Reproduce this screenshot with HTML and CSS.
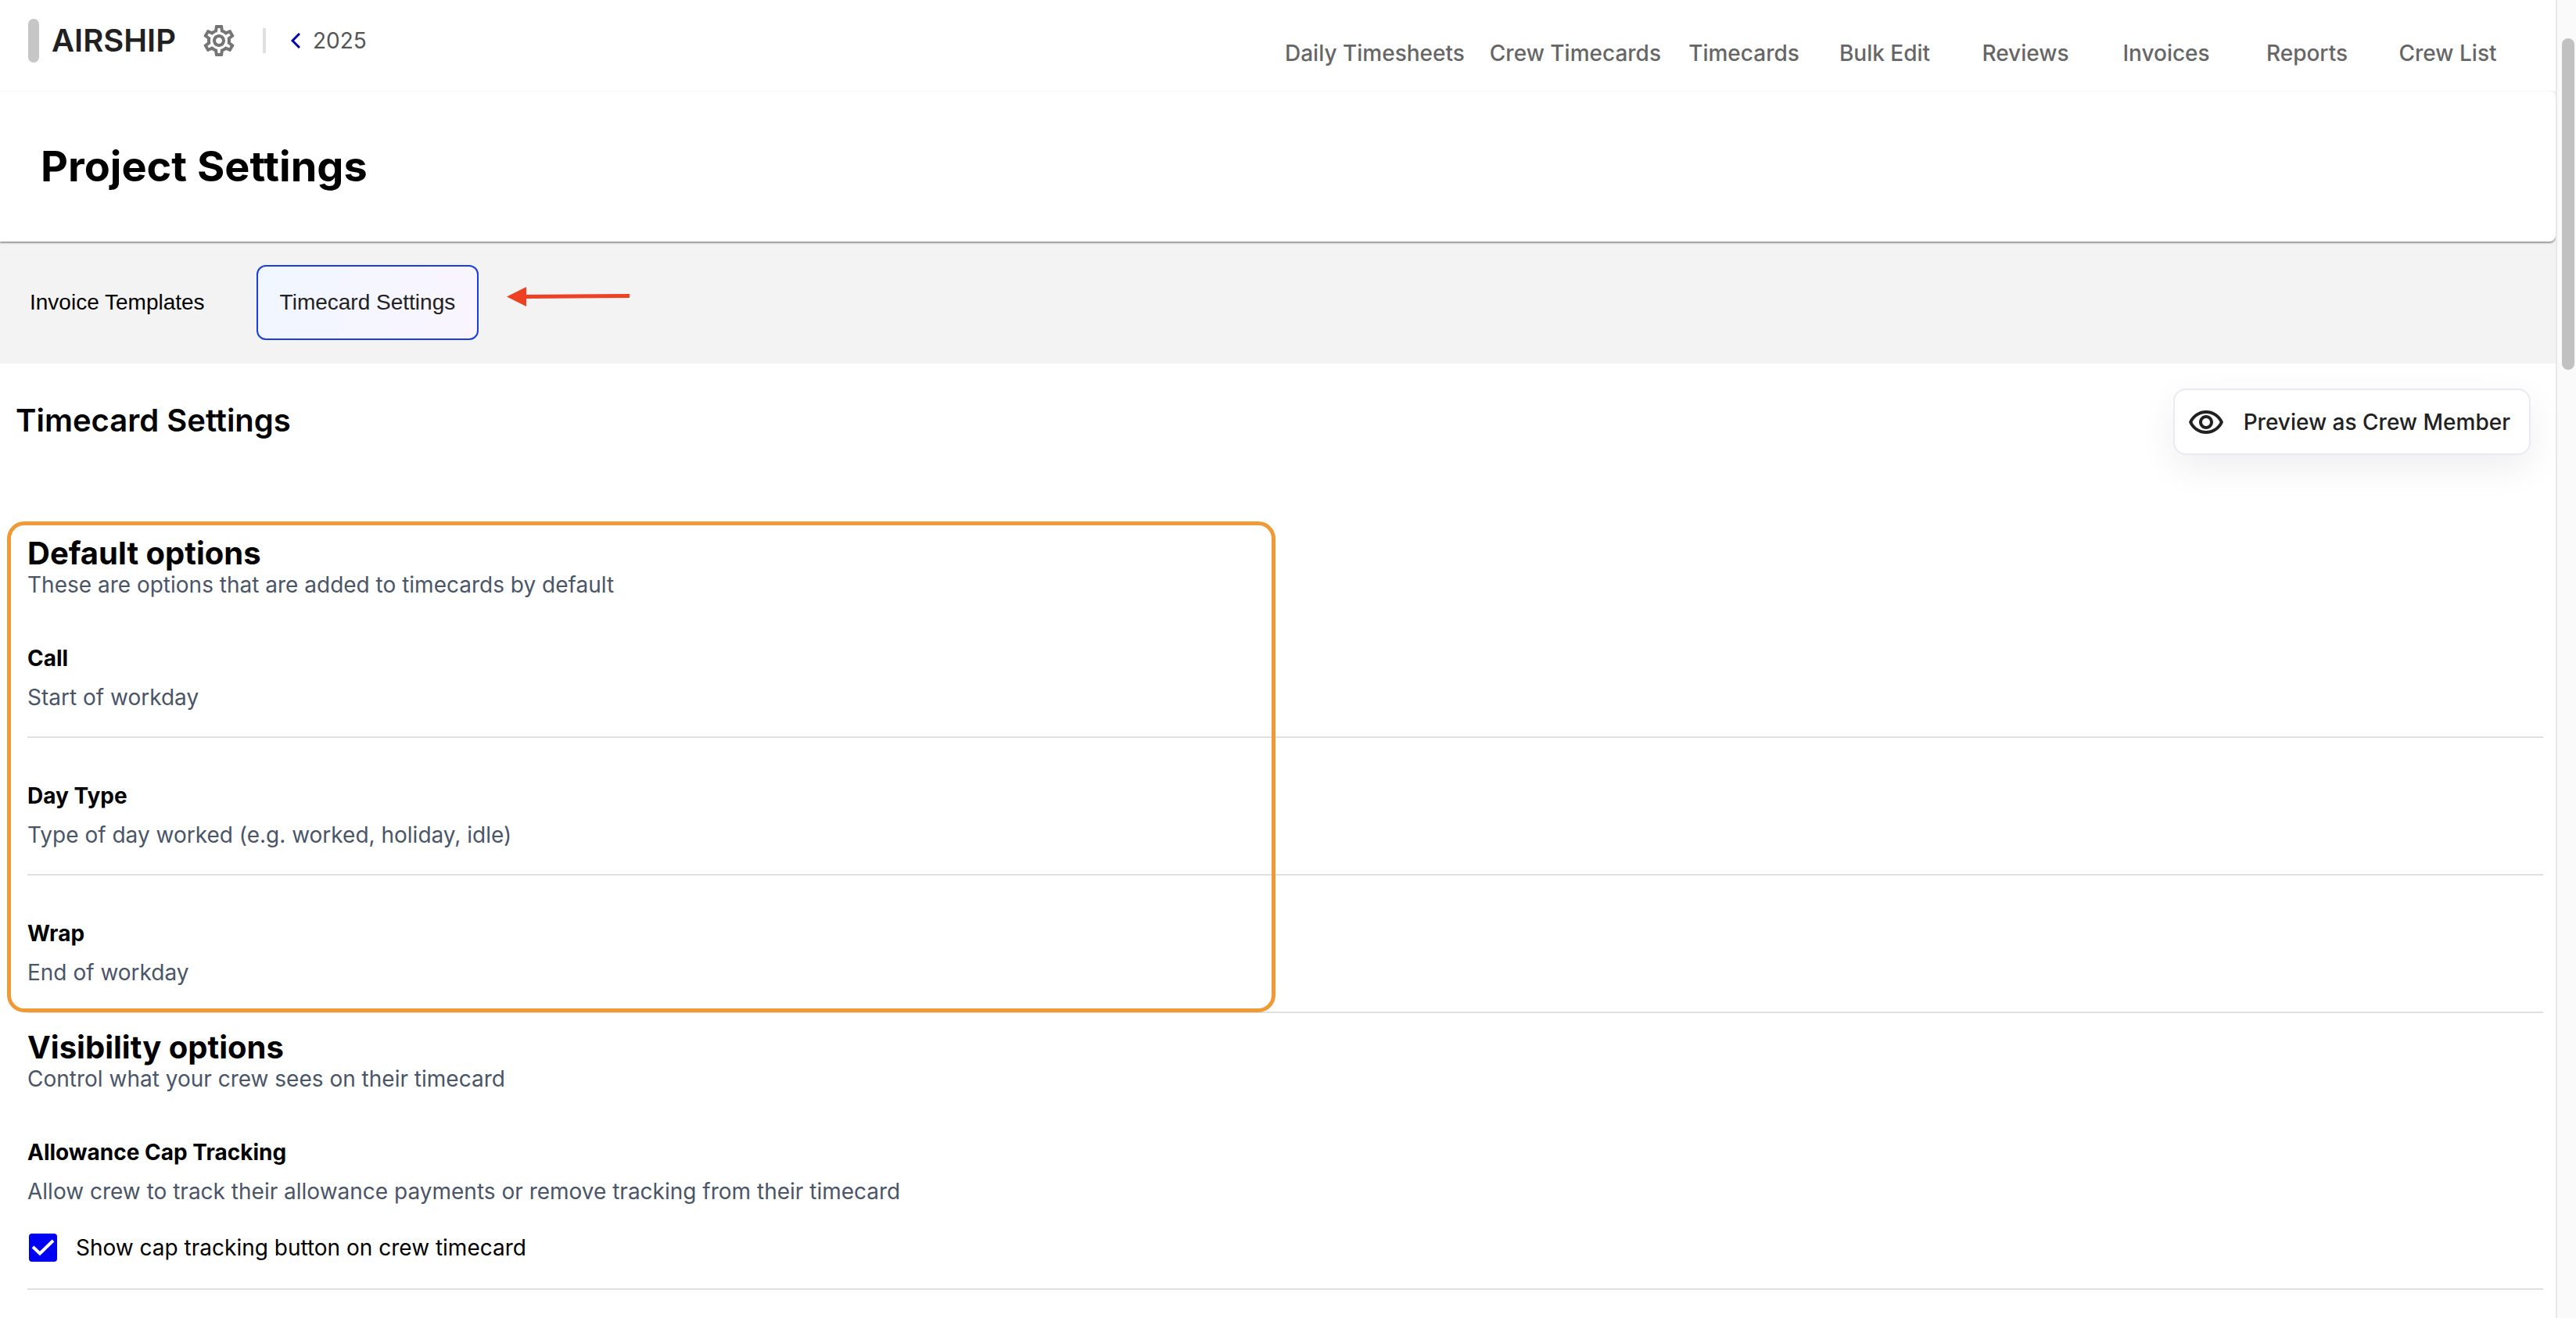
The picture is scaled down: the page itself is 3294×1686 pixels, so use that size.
FILE: index.html
```html
<!DOCTYPE html>
<html lang="en">
<head>
<meta charset="utf-8">
<title>Project Settings</title>
<link rel="stylesheet" href="styles.css">
</head>
<body>
<div class="page">
  <header class="topbar">
    <div class="brand">
      <span class="brand-mark"></span>
      <span class="brand-name">AIRSHIP</span>
      <button class="icon-button" type="button" aria-label="Settings">
        <svg class="icon" viewBox="0 0 24 24" aria-hidden="true"><path fill="currentColor" d="M19.43 12.98c.04-.32.07-.64.07-.98 0-.34-.03-.66-.07-.98l2.11-1.65c.19-.15.24-.42.12-.64l-2-3.46c-.09-.16-.26-.25-.44-.25-.06 0-.12.01-.17.03l-2.49 1c-.52-.4-1.08-.73-1.69-.98l-.38-2.65C14.46 2.18 14.25 2 14 2h-4c-.25 0-.46.18-.49.42l-.38 2.65c-.61.25-1.17.59-1.69.98l-2.49-1c-.06-.02-.12-.03-.18-.03-.17 0-.34.09-.43.25l-2 3.46c-.13.22-.07.49.12.64l2.11 1.65c-.04.32-.07.65-.07.98 0 .33.03.66.07.98l-2.11 1.65c-.19.15-.24.42-.12.64l2 3.46c.09.16.26.25.44.25.06 0 .12-.01.17-.03l2.49-1c.52.4 1.08.73 1.69.98l.38 2.65c.03.24.24.42.49.42h4c.25 0 .46-.18.49-.42l.38-2.65c.61-.25 1.17-.59 1.69-.98l2.49 1c.06.02.12.03.18.03.17 0 .34-.09.43-.25l2-3.46c.12-.22.07-.49-.12-.64l-2.11-1.65zm-1.98-1.71c.04.31.05.52.05.73 0 .21-.02.43-.05.73l-.14 1.13.89.7 1.08.84-.7 1.21-1.27-.51-1.04-.42-.9.68c-.43.32-.84.56-1.25.73l-1.06.43-.16 1.13-.2 1.35h-1.4l-.19-1.35-.16-1.13-1.06-.43c-.43-.18-.83-.41-1.23-.71l-.91-.7-1.06.43-1.27.51-.7-1.21 1.08-.84.89-.7-.14-1.13c-.03-.31-.05-.54-.05-.74s.02-.43.05-.73l.14-1.13-.89-.7-1.08-.84.7-1.21 1.27.51 1.04.42.9-.68c.43-.32.84-.56 1.25-.73l1.06-.43.16-1.13.2-1.35h1.39l.19 1.35.16 1.13 1.06.43c.43.18.83.41 1.23.71l.91.7 1.06-.43 1.27-.51.7 1.21-1.07.85-.89.7.14 1.13zM12 8c-2.21 0-4 1.79-4 4s1.79 4 4 4 4-1.79 4-4-1.79-4-4-4zm0 6c-1.1 0-2-.9-2-2s.9-2 2-2 2 .9 2 2-.9 2-2 2z"/></svg>
      </button>
      <span class="brand-divider"></span>
      <a class="back-link" href="#"><svg class="chevron" viewBox="0 0 12 20" aria-hidden="true"><path d="M11 1 2 10l9 9" fill="none" stroke="currentColor" stroke-width="3"/></svg>2025</a>
    </div>
    <nav class="nav" aria-label="Main">
      <a href="#">Daily Timesheets</a>
      <a href="#">Crew Timecards</a>
      <a href="#">Timecards</a>
      <a href="#">Bulk Edit</a>
      <a href="#">Reviews</a>
      <a href="#">Invoices</a>
      <a href="#">Reports</a>
      <a href="#">Crew List</a>
    </nav>
  </header>

  <div class="banner">
    <div class="title-card"><h1>Project Settings</h1></div>
    <div class="tabs">
      <button class="tab" type="button">Invoice Templates</button>
      <button class="tab tab-active" type="button">Timecard Settings</button>
      <svg class="arrow" viewBox="0 0 158 26" aria-hidden="true"><path fill="#ee4023" d="M0 13.500 25 1v10l132-1v5L25 16v10z"/></svg>
    </div>
  </div>

  <main class="content">
    <div class="content-head">
      <h2>Timecard Settings</h2>
      <button class="preview" type="button">
        <svg class="icon" viewBox="0 0 24 24" aria-hidden="true"><path fill="currentColor" d="M12 6.500c3.790 0 7.170 2.130 8.820 5.500-1.650 3.370-5.030 5.500-8.820 5.500S4.830 15.370 3.180 12C4.830 8.630 8.210 6.500 12 6.500m0-2C7 4.500 2.730 7.610 1 12c1.730 4.390 6 7.500 11 7.500s9.270-3.110 11-7.500c-1.730-4.390-6-7.500-11-7.500m0 5c1.380 0 2.500 1.120 2.500 2.500s-1.120 2.500-2.500 2.500-2.500-1.120-2.500-2.500 1.120-2.500 2.500-2.500m0-2c-2.480 0-4.500 2.020-4.500 4.500s2.020 4.500 4.500 4.500 4.500-2.020 4.500-4.500-2.020-4.500-4.500-4.500"/></svg>
        Preview as Crew Member
      </button>
    </div>

    <section class="group group-marked">
      <h2>Default options</h2>
      <p class="note">These are options that are added to timecards by default</p>
      <div class="item">
        <h3>Call</h3>
        <p>Start of workday</p>
      </div>
      <div class="item">
        <h3>Day Type</h3>
        <p>Type of day worked (e.g. worked, holiday, idle)</p>
      </div>
      <div class="item">
        <h3>Wrap</h3>
        <p>End of workday</p>
      </div>
    </section>

    <section class="group">
      <h2>Visibility options</h2>
      <p class="note">Control what your crew sees on their timecard</p>
      <div class="item">
        <h3>Allowance Cap Tracking</h3>
        <p>Allow crew to track their allowance payments or remove tracking from their timecard</p>
        <label class="check">
          <span class="check-box">
            <input type="checkbox" checked>
            <svg viewBox="0 0 36 36" aria-hidden="true"><path d="M5 17l9 8.500L31 9" fill="none" stroke="#fff" stroke-width="4"/></svg>
          </span>
          Show cap tracking button on crew timecard
        </label>
      </div>
    </section>
  </main>
</div>
<div class="scroll-track"><div class="scroll-thumb"></div></div>
</body>
</html>
```
FILE: styles.css
```css
*, *::after { box-sizing: border-box; }

body {
  margin: 0;
  height: 100vh;
  overflow: hidden;
  display: grid;
  grid-template-columns: minmax(0, 1fr) 26px;
  background: #fff;
  color: #000;
  font: 400 28px/44px Inter, "Liberation Sans", sans-serif;
}

h1, h2, h3, p { margin: 0; }
a { color: inherit; text-decoration: none; }
button { font: inherit; color: inherit; border: 0; background: none; padding: 0; }
.icon { display: block; width: 48px; height: 48px; }

/* Top bar */
.topbar {
  display: flex;
  justify-content: space-between;
  height: 117px;
  padding: 0 48px 0 36px;
  border-bottom: 1px solid #f8f8f8;
}
.brand { display: flex; align-items: center; height: 104px; }
.brand-mark { width: 14px; height: 56px; border-radius: 7px; background: #c6c6c6; }
.brand-name { margin-left: 16px; font-size: 40px; font-weight: 600; color: #212121; }
.icon-button { margin-left: 31px; color: #757575; }
.brand-divider { width: 4px; height: 32px; margin: 0 32px; background: #e0e0e0; }
.back-link { display: flex; align-items: center; gap: 16px; color: #555; }
.chevron { width: 12px; height: 20px; color: #0000b0; }

.nav { display: flex; padding-top: 46px; }
.nav a {
  min-width: 180px;
  padding: 0 16px;
  text-align: center;
  font-weight: 500;
  color: #666;
}

/* Page title and tabs */
.banner { background: #f3f3f3; }
.title-card {
  padding: 64px 52px;
  background: #fff;
  border-radius: 0 8px 8px 0;
  box-shadow: 0 2px 2px #979b98;
}
h1 { font-size: 54px; line-height: 64px; font-weight: 700; }
.tabs { display: flex; align-items: center; gap: 36px; padding: 30px 8px; }
.tab {
  height: 96px;
  padding: 0 28px;
  border: 2px solid transparent;
  border-radius: 12px;
  font-family: "Liberation Sans", Arial, sans-serif;
}
.tab-active {
  border-color: #1a3ddb;
  background: linear-gradient(100deg, #f0f6ff, #faf5ff);
  color: #222;
}
.arrow { width: 158px; height: 26px; margin-bottom: 16px; }

/* Settings */
.content { padding: 32px 16px 0 0; }
.content-head {
  display: flex;
  justify-content: space-between;
  align-items: flex-start;
  margin-bottom: 82px;
  padding: 0 16px 0 20px;
}
h2 { font-size: 40px; line-height: 40px; font-weight: 600; }
.content-head h2 { line-height: 82px; }
.preview {
  display: flex;
  align-items: center;
  gap: 24px;
  height: 85px;
  padding: 0 24px 0 16px;
  border: 2px solid #ebeaf2;
  border-radius: 16px;
  background: #fff;
  box-shadow: 0 16px 48px rgba(0, 0, 0, 0.07);
  font-weight: 500;
  color: #212121;
}

.group { padding: 24px 0 0 35px; }
.group h2 { font-weight: 700; }
.note { line-height: 40px; color: #4a5568; }
.item {
  display: flex;
  flex-direction: column;
  gap: 6px;
  padding: 52px 0 28px;
  border-bottom: 2px solid #e0e0e0;
}
.item p { color: #4a5568; }
h3 { font-size: 28px; line-height: 44px; font-weight: 700; }

/* Outline drawn over the first group */
.group-marked { position: relative; }
.group-marked::after {
  content: "";
  position: absolute;
  inset: 3px auto 1px 9px;
  width: calc(50% - 4px);
  border: 5px solid #f09a37;
  border-radius: 22px;
  pointer-events: none;
}

.check { display: flex; align-items: center; gap: 24px; padding: 22px 0 2px 2px; }
.check-box { position: relative; width: 36px; height: 36px; }
.check-box input {
  appearance: none;
  display: block;
  width: 36px;
  height: 36px;
  margin: 0;
  border-radius: 4px;
  background: #0000f5;
}
.check-box svg { position: absolute; inset: 0; pointer-events: none; }

/* Scroll bar */
.scroll-track {
  padding: 49px 2px 0 6px;
  border-left: 2px solid #e8e8e8;
  background: #fafafa;
}
.scroll-thumb { height: 424px; border-radius: 8px; background: #c1c1c1; }
```
